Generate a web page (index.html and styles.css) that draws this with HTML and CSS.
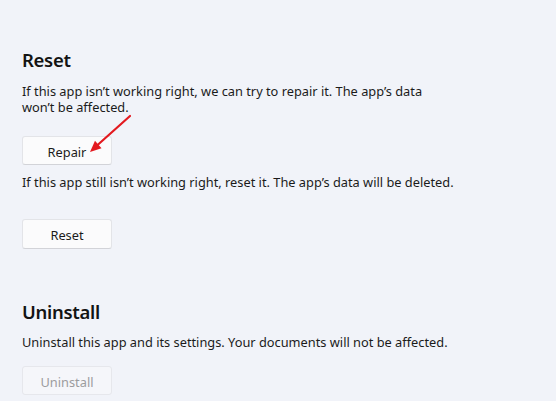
FILE: index.html
```html
<!DOCTYPE html>
<html lang="en">
<head>
<meta charset="utf-8">
<title>Reset and Uninstall</title>
<link rel="stylesheet" href="styles.css">
</head>
<body>
<main class="page">
  <section class="group group-reset">
    <h2 class="title">Reset</h2>
    <p class="desc desc-first">If this app isn’t working right, we can try to repair it. The app’s data won’t be affected.</p>
    <button class="btn btn-repair" type="button">Repair</button>
    <p class="desc desc-second">If this app still isn’t working right, reset it. The app’s data will be deleted.</p>
    <button class="btn btn-reset" type="button">Reset</button>
  </section>
  <section class="group group-uninstall">
    <h2 class="title">Uninstall</h2>
    <p class="desc desc-third">Uninstall this app and its settings. Your documents will not be affected.</p>
    <button class="btn btn-uninstall" type="button" disabled>Uninstall</button>
  </section>
  <svg class="arrow" width="556" height="401" viewBox="0 0 556 401" aria-hidden="true">
    <line x1="130" y1="116" x2="97" y2="145.5" stroke="#e3191f" stroke-width="2.2" stroke-linecap="round"/>
    <polygon points="90,152 101.5,148.2 95,140.8" fill="#e3191f"/>
  </svg>
</main>
</body>
</html>
```
FILE: styles.css
```css
html, body {
  margin: 0;
  padding: 0;
}
body {
  background: #f1f3f9;
  font-family: "Segoe UI", "Noto Sans", "Open Sans", sans-serif;
  color: #1b1b1b;
  width: 556px;
  height: 401px;
  overflow: hidden;
}
.page {
  position: relative;
  padding: 48px 0 0 22px;
  width: 500px;
}
.group {
  display: flex;
  flex-direction: column;
  align-items: flex-start;
}
.group-uninstall {
  margin-top: 51px;
}
.title {
  margin: 0;
  font-size: 18.5px;
  font-weight: 600;
  letter-spacing: -0.3px;
  line-height: 24px;
  color: #131313;
}
.desc {
  margin: 0;
  font-size: 12.8px;
  line-height: 16px;
}
.desc-first {
  margin-top: 11px;
  max-width: 420px;
}
.desc-second {
  margin-top: 9px;
}
.desc-third {
  margin-top: 10px;
}
.btn {
  box-sizing: border-box;
  width: 90px;
  height: 29px;
  background: #fbfbfc;
  border: 1px solid #e3e4e8;
  border-bottom-color: #d2d3d8;
  border-radius: 3px;
  font-family: inherit;
  font-size: 12.8px;
  color: #1b1b1b;
  padding: 2px 0 0;
}
.btn-repair {
  margin-top: 21px;
}
.btn-reset {
  margin-top: 29px;
  height: 30px;
}
.btn-uninstall {
  margin-top: 16px;
}
.btn:disabled {
  background: #f5f6fa;
  border-color: #e6e7ec;
  color: #9c9c9e;
}
.arrow {
  position: absolute;
  left: 0;
  top: 0;
  pointer-events: none;
}
```
